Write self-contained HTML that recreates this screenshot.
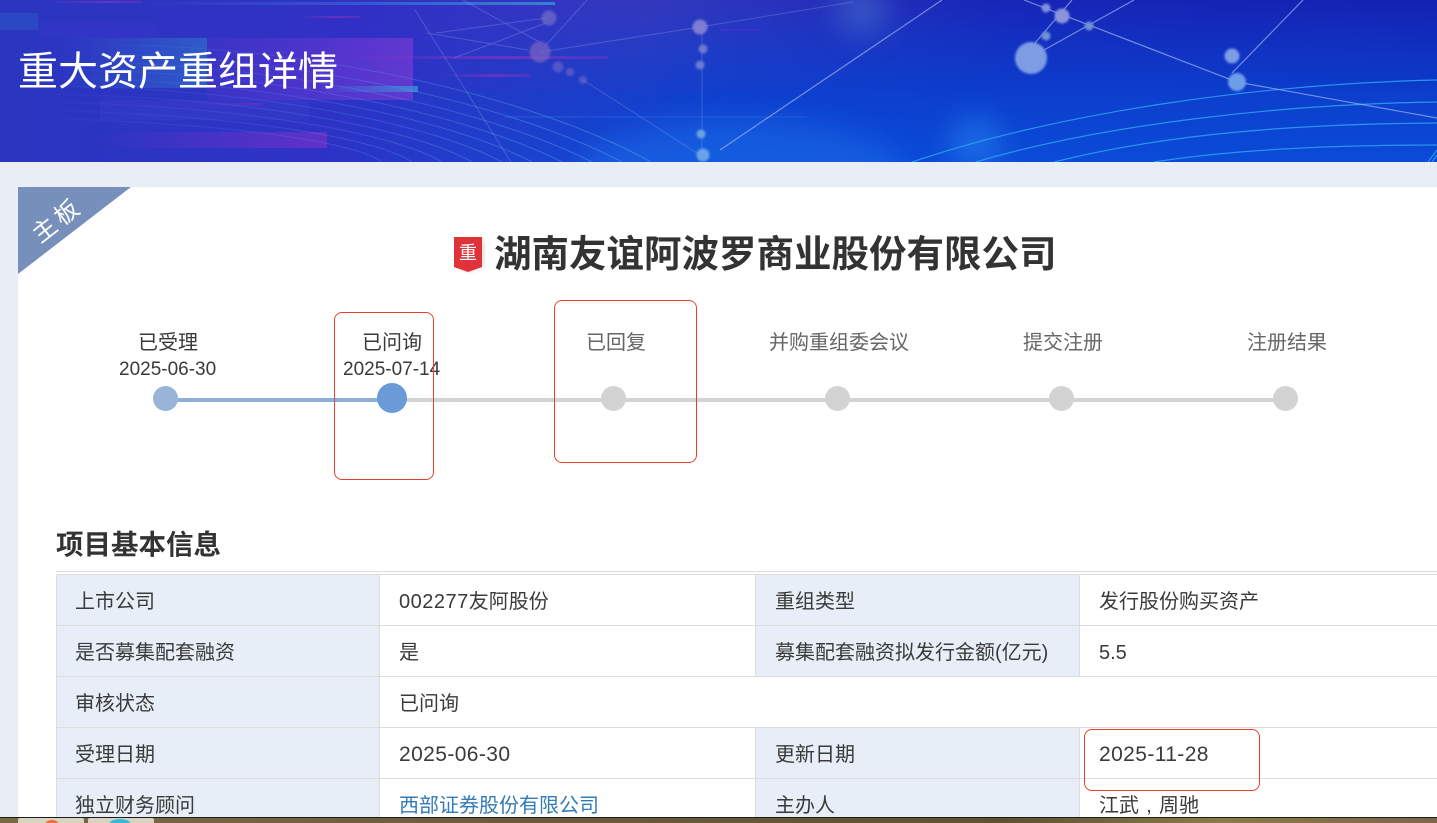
<!DOCTYPE html>
<html lang="zh"><head><meta charset="utf-8"><title>重大资产重组详情</title>
<style>
html,body{margin:0;padding:0;width:1437px;height:823px;overflow:hidden;background:#e9edf5}
body{position:relative;font-family:"Liberation Sans","Noto Sans CJK SC",sans-serif;color:#3a3a3a}
.t{position:absolute;white-space:nowrap;line-height:1}
.g{color:#666}
.b{position:absolute;background:#ddd}
.h{position:absolute;background:#e7eef7}
.dot{position:absolute;border-radius:50%;width:25px;height:25px;top:386px;background:#d3d3d3}
.red{position:absolute;border:1px solid #e8402a;border-radius:8px;box-sizing:border-box}
</style></head><body>
<svg style="position:absolute;left:0;top:0" width="1437" height="162" viewBox="0 0 1437 162">
<defs>
<linearGradient id="bg" x1="0" y1="0" x2="1" y2="0"><stop offset="0" stop-color="#2a36c0"/><stop offset=".25" stop-color="#3230c6"/><stop offset=".45" stop-color="#3438be"/><stop offset=".7" stop-color="#1826b8"/><stop offset="1" stop-color="#1522b2"/></linearGradient>
<linearGradient id="bg2" x1="0" y1="0" x2="0" y2="1"><stop offset="0" stop-color="#0a46d4" stop-opacity="0"/><stop offset=".55" stop-color="#0a42d0" stop-opacity=".8"/><stop offset="1" stop-color="#0a4cd8" stop-opacity="1"/></linearGradient>
<linearGradient id="mask" x1="0" y1="0" x2="1" y2="0"><stop offset="0" stop-color="#fff" stop-opacity="0"/><stop offset=".25" stop-color="#fff" stop-opacity=".5"/><stop offset=".45" stop-color="#fff"/></linearGradient>
<mask id="m"><rect width="1437" height="162" fill="url(#mask)"/></mask>
<linearGradient id="mask2" x1="0" y1="0" x2="1" y2="0"><stop offset=".22" stop-color="#000"/><stop offset=".5" stop-color="#fff"/></linearGradient>
<mask id="m2"><rect width="1437" height="162" fill="url(#mask2)"/></mask>
<linearGradient id="fp" x1="0" y1="0" x2="1" y2="0"><stop offset="0" stop-color="#5a35d0" stop-opacity=".25"/><stop offset="1" stop-color="#6238d0"/></linearGradient>
<linearGradient id="fb" x1="0" y1="0" x2="1" y2="0"><stop offset="0" stop-color="#2f60c8" stop-opacity="0"/><stop offset="1" stop-color="#2f60c8" stop-opacity=".9"/></linearGradient>
<linearGradient id="fl" x1="0" y1="0" x2="1" y2="0"><stop offset="0" stop-color="#6a30c8" stop-opacity="0"/><stop offset="1" stop-color="#6a30c8" stop-opacity=".85"/></linearGradient>
<linearGradient id="fc" x1="0" y1="0" x2="1" y2="0"><stop offset="0" stop-color="#3a90d8" stop-opacity="0"/><stop offset="1" stop-color="#3a98dc" stop-opacity=".75"/></linearGradient>
<linearGradient id="fs" x1="0" y1="0" x2="1" y2="0"><stop offset="0" stop-color="#9a30c8" stop-opacity="0"/><stop offset=".6" stop-color="#9a30c8" stop-opacity=".55"/><stop offset="1" stop-color="#9a30c8" stop-opacity=".3"/></linearGradient>
<filter id="bl" x="-50%" y="-50%" width="200%" height="200%"><feGaussianBlur stdDeviation="1"/></filter>
<filter id="bl2" x="-100%" y="-100%" width="300%" height="300%"><feGaussianBlur stdDeviation="14"/></filter>
</defs>
<rect width="1437" height="162" fill="url(#bg)"/>
<rect x="0" y="90" width="1437" height="72" fill="#2040c8" opacity=".35" mask="url(#m)"/>
<rect width="1437" height="162" fill="url(#bg2)" mask="url(#m2)"/>
<ellipse cx="740" cy="170" rx="160" ry="50" fill="#1a6ae6" opacity=".55" filter="url(#bl2)"/>
<circle cx="862" cy="10" r="26" fill="#4a70cc" opacity=".55" filter="url(#bl2)"/>
<circle cx="976" cy="143" r="26" fill="#2680ee" opacity=".6" filter="url(#bl2)"/>
<rect x="0" y="13" width="38" height="17" fill="#2b50c4" opacity=".7"/>
<rect x="41" y="22" width="117" height="16" fill="#3536c8" opacity=".6"/>
<rect x="60" y="38" width="147" height="50" fill="url(#fb)"/>
<rect x="207" y="38" width="206" height="62" fill="url(#fp)"/>
<rect x="100" y="100" width="209" height="20" fill="#3a3ccc" opacity=".45"/>
<rect x="100" y="132" width="227" height="16" fill="url(#fl)"/>
<rect x="170" y="103" width="93" height="3" fill="url(#fl)" opacity=".7"/>
<rect x="320" y="86" width="98" height="6" fill="url(#fc)"/>
<rect x="140" y="2" width="415" height="3" fill="url(#fc)"/>
<rect x="46" y="1" width="96" height="2" fill="url(#fs)"/>
<rect x="300" y="16" width="60" height="2" fill="url(#fs)"/>
<rect x="340" y="56" width="268" height="3" fill="url(#fs)"/>
<rect x="440" y="74" width="91" height="3" fill="url(#fs)"/>
<rect x="720" y="29" width="40" height="2" fill="#4a2ed0" opacity=".6"/>
<rect x="505" y="116" width="302" height="2" fill="#2a70e0" opacity=".3"/>
<g fill="none" stroke="#5aa0ea" stroke-width="1" opacity=".55" mask="url(#m)">
<path d="M120 45C330 48 540 100 651 162"/><path d="M100 54C320 58 520 108 622 162"/><path d="M90 62C310 66 500 115 592 162"/><path d="M80 70C300 74 480 120 562 162"/><path d="M70 78C290 82 460 124 532 162"/><path d="M60 86C280 90 440 128 502 162"/><path d="M50 94C270 98 420 132 472 162"/><path d="M40 102C260 106 400 136 442 162"/><path d="M30 110C250 114 380 140 412 162"/><path d="M20 118C240 122 360 144 382 162"/>
</g>
<g fill="none" stroke="#2f9cf0" stroke-width="1.2" opacity=".9">
<path d="M912 162C1060 112 1260 84 1437 80"/><path d="M976 162C1100 125 1280 104 1437 102"/><path d="M1054 162C1170 133 1300 124 1437 123"/><path d="M1154 162C1230 150 1330 145 1437 145"/><path d="M1428 162L1437 150"/><path d="M1432 162L1437 155"/>
</g>
<g fill="none" stroke="#a4b4ec" stroke-width="1" opacity=".28">
<path d="M702 26V156"/><path d="M541 52L700 27"/><path d="M700 27L853 2"/><path d="M436 33L546 18"/><path d="M454 58L546 23"/><path d="M427 33L528 50"/><path d="M546 45L587 0"/><path d="M463 0L541 43"/><path d="M583 80L697 153"/><path d="M415 10L511 162"/>
</g>
<g fill="none" stroke="#a8bcf0" stroke-width="1.2" opacity=".65">
<path d="M942 0L720 150"/>
<path d="M1024 0L1237 82L1437 118"/><path d="M1232 73L1303 0"/><path d="M1134 0L1044 50"/><path d="M1072 0L1035 43"/>
</g>
<g filter="url(#bl)">
<circle cx="549" cy="18" r="7.5" fill="#8078c8" opacity=".6"/>
<circle cx="540" cy="52" r="10.5" fill="#8268c0" opacity=".65"/>
<circle cx="558" cy="67" r="5.5" fill="#7a70c8" opacity=".55"/><circle cx="570" cy="72" r="4" fill="#7a70c8" opacity=".55"/><circle cx="583" cy="80" r="4" fill="#7a70c8" opacity=".55"/>
<circle cx="700" cy="27" r="7.5" fill="#8c88d4" opacity=".85"/>
<circle cx="703" cy="49" r="4.5" fill="#8088d4" opacity=".8"/><circle cx="700" cy="65" r="4.5" fill="#8088d4" opacity=".8"/>
<circle cx="701" cy="134" r="4.5" fill="#6aa0e4"/><circle cx="703" cy="155" r="6.5" fill="#6aa4e8"/>
<circle cx="1046" cy="8" r="4.5" fill="#7d90dc"/>
<circle cx="1062" cy="16" r="7.5" fill="#8a94d8"/><circle cx="1089" cy="26" r="4.5" fill="#6f90d8"/><circle cx="1046" cy="36" r="4.5" fill="#6f90d8"/>
<circle cx="1031" cy="58" r="16" fill="#7d9ce4"/>
<circle cx="1232" cy="56" r="7.5" fill="#7d9ce4"/><circle cx="1237" cy="82" r="9" fill="#6d9ee8"/>
</g>
<text x="18" y="85" font-family="'Liberation Sans','WenQuanYi Zen Hei','Noto Sans CJK SC',sans-serif" font-size="40" fill="#fff">重大资产重组详情</text>
</svg>

<div style="position:absolute;left:18px;top:187px;width:1419px;height:630px;background:#fff"></div>
<svg style="position:absolute;left:18px;top:187px" width="114" height="87"><polygon points="0,0 113,0 0,87" fill="#7690bb"/></svg>
<div class="t" style="left:30px;top:209px;font-size:24px;color:#fff;transform:rotate(-38deg);letter-spacing:4px;font-family:'Liberation Sans','WenQuanYi Zen Hei',sans-serif">主板</div>

<svg style="position:absolute;left:450px;top:233px" width="38" height="44"><defs><filter id="s"><feGaussianBlur stdDeviation="2"/></filter></defs><polygon points="6,6 34,6 34,34 20,39 6,34" fill="#bbb" opacity=".5" filter="url(#s)"/><polygon points="4,4 32,4 32,34 18,39 4,34" fill="#e03339"/><text x="18" y="26" font-size="18" fill="#fff" text-anchor="middle" font-family="'Liberation Sans','WenQuanYi Zen Hei',sans-serif">重</text></svg>
<div class="t" style="left:494px;top:236px;font-size:37.5px;font-weight:bold;color:#333;font-family:'Liberation Sans','Noto Sans CJK SC',sans-serif">湖南友谊阿波罗商业股份有限公司</div>

<div style="position:absolute;left:165px;top:398px;width:227px;height:4px;background:#8eb0da"></div>
<div style="position:absolute;left:392px;top:398px;width:893px;height:4px;background:#d3d3d3"></div>
<div class="dot" style="left:153px;background:#98b4d8"></div>
<div class="dot" style="left:377px;top:383px;width:30px;height:30px;background:#6b9ad9"></div>
<div class="dot" style="left:601px"></div><div class="dot" style="left:825px"></div><div class="dot" style="left:1049px"></div><div class="dot" style="left:1273px"></div>

<div class="t" style="left:138px;top:333px;font-size:20px">已受理</div>
<div class="t" style="left:119px;top:360px;font-size:19px">2025-06-30</div>
<div class="t" style="left:362px;top:333px;font-size:20px">已问询</div>
<div class="t" style="left:343px;top:360px;font-size:19px">2025-07-14</div>
<div class="t g" style="left:586px;top:333px;font-size:20px">已回复</div>
<div class="t g" style="left:769px;top:333px;font-size:20px">并购重组委会议</div>
<div class="t g" style="left:1023px;top:333px;font-size:20px">提交注册</div>
<div class="t g" style="left:1247px;top:333px;font-size:20px">注册结果</div>

<div class="t" style="left:56px;top:531px;font-size:27.5px;font-weight:bold;color:#333">项目基本信息</div>

<div class="h" style="left:57px;top:574px;width:322px;height:243px"></div>
<div class="h" style="left:756px;top:574px;width:323px;height:102px"></div>
<div class="h" style="left:756px;top:727px;width:323px;height:90px"></div>
<div class="b" style="left:56px;top:571px;width:1381px;height:1px"></div>
<div class="b" style="left:56px;top:574px;width:1381px;height:1px"></div>
<div class="b" style="left:56px;top:625px;width:1381px;height:1px"></div>
<div class="b" style="left:56px;top:676px;width:1381px;height:1px"></div>
<div class="b" style="left:56px;top:727px;width:1381px;height:1px"></div>
<div class="b" style="left:56px;top:778px;width:1381px;height:1px"></div>
<div class="b" style="left:56px;top:574px;width:1px;height:243px"></div>
<div class="b" style="left:379px;top:574px;width:1px;height:243px"></div>
<div class="b" style="left:755px;top:574px;width:1px;height:102px"></div>
<div class="b" style="left:1079px;top:574px;width:1px;height:102px"></div>
<div class="b" style="left:755px;top:727px;width:1px;height:90px"></div>
<div class="b" style="left:1079px;top:727px;width:1px;height:90px"></div>

<div class="t" style="left:75px;top:592px;font-size:20px">上市公司</div>
<div class="t" style="left:399px;top:592px;font-size:20px"><span style="letter-spacing:.5px">002277</span>友阿股份</div>
<div class="t" style="left:775px;top:592px;font-size:20px">重组类型</div>
<div class="t" style="left:1099px;top:592px;font-size:20px">发行股份购买资产</div>
<div class="t" style="left:75px;top:643px;font-size:20px">是否募集配套融资</div>
<div class="t" style="left:399px;top:643px;font-size:20px">是</div>
<div class="t" style="left:775px;top:643px;font-size:20px">募集配套融资拟发行金额(亿元)</div>
<div class="t" style="left:1099px;top:643px;font-size:20px">5.5</div>
<div class="t" style="left:75px;top:694px;font-size:20px">审核状态</div>
<div class="t" style="left:399px;top:694px;font-size:20px">已问询</div>
<div class="t" style="left:75px;top:745px;font-size:20px">受理日期</div>
<div class="t" style="left:399px;top:744px;font-size:21px;letter-spacing:.4px">2025-06-30</div>
<div class="t" style="left:775px;top:745px;font-size:20px">更新日期</div>
<div class="t" style="left:1099px;top:744px;font-size:21px;letter-spacing:.4px">2025-11-28</div>
<div class="t" style="left:75px;top:796px;font-size:20px">独立财务顾问</div>
<div class="t" style="left:399px;top:796px;font-size:20px;color:#337ab7">西部证券股份有限公司</div>
<div class="t" style="left:775px;top:796px;font-size:20px">主办人</div>
<div class="t" style="left:1099px;top:796px;font-size:20px">江武<span style="display:inline-block;width:20px;text-align:center">,</span>周驰</div>

<div class="red" style="left:334px;top:312px;width:100px;height:168px"></div>
<div class="red" style="left:554px;top:300px;width:143px;height:163px"></div>
<div class="red" style="left:1084px;top:729px;width:176px;height:62px"></div>

<div style="position:absolute;left:0;top:817px;width:1437px;height:6px;background:linear-gradient(90deg,#7a6a48,#6b5a3a 40%,#5c5232 70%,#8b7a4a 85%,#7c6648);border-top:1px solid #1c1c1c;box-sizing:border-box"></div>
<div style="position:absolute;left:18px;top:818px;width:66px;height:5px;background:#d8d4c0;border-radius:2px 2px 0 0;overflow:hidden"><div style="position:absolute;left:28px;top:2px;width:12px;height:6px;border-radius:50%;background:#e8703a"></div></div>
<div style="position:absolute;left:88px;top:818px;width:66px;height:5px;background:#d8d4c0;border-radius:2px 2px 0 0;overflow:hidden"><div style="position:absolute;left:22px;top:1px;width:20px;height:8px;border-radius:50%;background:#35bcd0"></div></div>
</body></html>
